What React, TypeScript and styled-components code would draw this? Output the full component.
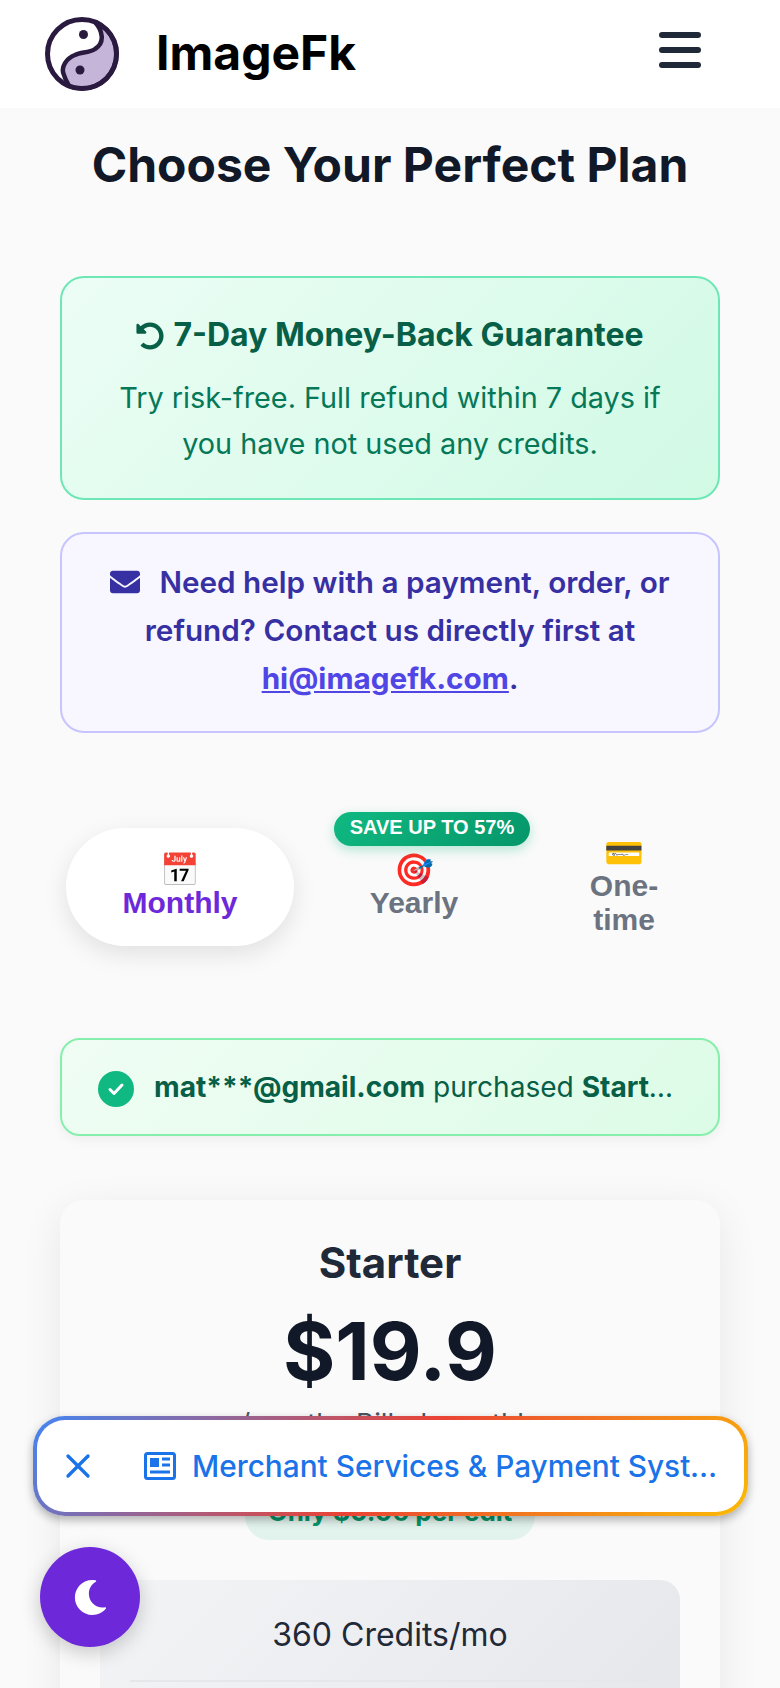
import * as React from "react";
import styled, { createGlobalStyle } from "styled-components";
import { X } from "lucide-react";
import { FaEnvelope, FaMoon, FaUndoAlt } from "react-icons/fa";

const GlobalStyle = createGlobalStyle`
  html, body {
    margin: 0;
    padding: 0;
    background: #fafafa;
    font-family: Inter, "Noto Sans", sans-serif;
    color: #111827;
  }
  * {
    box-sizing: border-box;
  }
  #root {
    height: 1688px;
    overflow: hidden;
  }
`;

const Header = styled.header`
  height: 108px;
  background: #ffffff;
  display: flex;
  align-items: center;
  justify-content: space-between;
  padding: 0 79px 0 45px;
`;

const Brand = styled.div`
  display: flex;
  align-items: center;
  gap: 37px;
`;

const BrandName = styled.span`
  font-size: 48px;
  font-weight: 700;
  color: #000000;
  line-height: 1;
  margin-bottom: 3px;
`;

const Burger = styled.div`
  display: flex;
  flex-direction: column;
  gap: 9px;
  width: 42px;
  margin-bottom: 8px;
`;

const BurgerLine = styled.span`
  display: block;
  height: 6px;
  border-radius: 3px;
  background: #1f2937;
`;

const Main = styled.main`
  padding: 0 60px;
`;

const Title = styled.h1`
  margin: 0 -40px;
  padding-top: 28px;
  height: 168px;
  text-align: center;
  font-size: 48px;
  line-height: 58px;
  font-weight: 700;
  color: #111827;
`;

const GuaranteeCard = styled.section`
  height: 224px;
  border: 2px solid #6ee7b7;
  border-radius: 24px;
  background: linear-gradient(135deg, #ecfdf5, #d1fae5);
  text-align: center;
  padding: 35px 48px 0;
`;

const GuaranteeTitle = styled.h2`
  margin: 0 -30px 18px;
  font-size: 32px;
  line-height: 44px;
  font-weight: 700;
  color: #065f46;
  white-space: nowrap;
  svg {
    vertical-align: -4px;
    margin-right: 9px;
  }
`;

const GuaranteeText = styled.p`
  margin: 0;
  font-size: 28.8px;
  line-height: 46px;
  color: #047857;
`;

const HelpCard = styled.section`
  margin-top: 32px;
  height: 201px;
  border: 2px solid #c7c4fe;
  border-radius: 24px;
  background: #f8f7ff;
  text-align: center;
  padding: 24px 24px 0;
  font-size: 29.7px;
  line-height: 48px;
  font-weight: 600;
  color: #3730a3;
  a {
    color: #4f46e5;
    font-weight: 700;
    text-decoration: underline;
  }
  svg {
    vertical-align: -4px;
    margin-right: 19px;
  }
`;

const Tabs = styled.div`
  position: relative;
  margin-top: 86px;
  height: 136px;
  display: flex;
  align-items: center;
  padding-left: 6px;
`;

const Tab = styled.div<{ $active?: boolean; $width: number }>`
  width: ${p => p.$width}px;
  height: 118px;
  flex: none;
  display: flex;
  flex-direction: column;
  align-items: center;
  justify-content: center;
  text-align: center;
  border-radius: 59px;
  background: ${p => (p.$active ? "#ffffff" : "transparent")};
  box-shadow: ${p => (p.$active ? "0 8px 24px rgba(0,0,0,0.1)" : "none")};
  color: ${p => (p.$active ? "#6d28d9" : "#6b7280")};
  font-family: "Liberation Sans", Arial, sans-serif;
  font-size: 30px;
  line-height: 34px;
  font-weight: 700;
`;

const TabEmoji = styled.span`
  font-size: 32px;
  line-height: 32px;
`;

const SaveBadge = styled.span`
  position: absolute;
  left: 274px;
  top: -7px;
  width: 196px;
  height: 34px;
  padding-bottom: 3px;
  border-radius: 17px;
  display: flex;
  align-items: center;
  justify-content: center;
  background: linear-gradient(135deg, #10b981, #059669);
  box-shadow: 0 4px 12px rgba(16, 185, 129, 0.3);
  color: #ffffff;
  font-family: "Liberation Sans", Arial, sans-serif;
  font-size: 20px;
  font-weight: 700;
`;

const SaleStrip = styled.div`
  margin-top: 83px;
  height: 98px;
  border: 2px solid #86efac;
  border-radius: 20px;
  background: linear-gradient(135deg, #f0fdf4, #dcfce7);
  box-shadow: 0 4px 12px rgba(0, 0, 0, 0.05);
  display: flex;
  align-items: center;
  gap: 20px;
  padding: 0 36px;
`;

const SaleCheck = styled.span`
  width: 36px;
  height: 36px;
  flex: none;
  margin-top: 4px;
  border-radius: 50%;
  background: #10b981;
  display: flex;
  align-items: center;
  justify-content: center;
`;

const SaleText = styled.span`
  font-size: 28.1px;
  color: #065f46;
  white-space: nowrap;
  overflow: hidden;
  text-overflow: ellipsis;
  b {
    font-weight: 700;
  }
`;

const PlanCard = styled.section`
  margin-top: 64px;
  height: 700px;
  border-radius: 24px;
  background: #fafafa;
  box-shadow: 0 10px 40px rgba(0, 0, 0, 0.08);
  padding: 35px 40px;
  text-align: center;
`;

const PlanName = styled.h3`
  margin: 0;
  font-size: 42px;
  line-height: 56px;
  font-weight: 700;
  color: #1f2937;
`;

const PlanPrice = styled.div`
  margin-top: 12px;
  font-size: 80px;
  line-height: 96px;
  font-weight: 700;
  color: #111827;
`;

const PlanPeriod = styled.div`
  margin-top: 4px;
  font-size: 27.6px;
  line-height: 40px;
  color: #4b5563;
`;

const PerEdit = styled.div`
  margin: 45px auto 0;
  width: 290px;
  height: 52px;
  padding-top: 8px;
  border-radius: 24px;
  background: rgba(16, 185, 129, 0.1);
  color: #059669;
  font-size: 26px;
  font-weight: 700;
`;

const Features = styled.div`
  margin-top: 40px;
  border-radius: 20px;
  background: linear-gradient(135deg, #f3f4f6, #e5e7eb);
  padding: 35px 30px;
`;

const Feature = styled.div`
  font-size: 32px;
  line-height: 40px;
  color: #1f2937;
  padding-bottom: 25px;
  border-bottom: 2px solid #e5e7eb;
`;

const NoticeBar = styled.div`
  position: fixed;
  left: 33px;
  top: 1416px;
  width: 715px;
  height: 100px;
  padding: 4px;
  border-radius: 32px;
  background: linear-gradient(135deg, #4285f4, #ea4335, #fbbc05);
  box-shadow: 0 4px 10px rgba(0, 0, 0, 0.3);
`;

const NoticeInner = styled.div`
  height: 100%;
  border-radius: 28px;
  background: #ffffff;
  display: flex;
  align-items: center;
  color: #1a73e8;
  padding: 0 25px 0 21px;
  svg {
    flex: none;
  }
`;

const NoticeIcon = styled.svg`
  margin-left: 46px;
  margin-right: 16px;
`;

const NoticeText = styled.span`
  font-size: 29.8px;
  font-weight: 500;
  white-space: nowrap;
  overflow: hidden;
  text-overflow: ellipsis;
`;

const ThemeButton = styled.button`
  position: fixed;
  left: 40px;
  top: 1547px;
  width: 100px;
  height: 100px;
  border: 0;
  padding: 0;
  border-radius: 50%;
  background: #6d28d9;
  box-shadow: 0 6px 20px rgba(0, 0, 0, 0.2);
  display: flex;
  align-items: center;
  justify-content: center;
  color: #ffffff;
`;

const YinYang = () => (
  <svg width="74" height="74" viewBox="0 0 74 74" fill="none">
    <circle cx="37" cy="37" r="34.5" fill="#ffffff" />
    <path
      d="M49.900 5C58 14 60 26 50 32C44 36 36 35 30 38C22 41 15 50 19 58C20 62 22 65 24.100 69A34.500 34.500 0 0 0 49.900 5Z"
      fill="#c5b5d9"
      stroke="#2a1a40"
      strokeWidth="4.500"
    />
    <circle cx="37" cy="37" r="34.5" stroke="#2a1a40" strokeWidth="5" />
    <circle cx="38.500" cy="17.500" r="4.500" fill="#2a1a40" />
    <circle cx="35" cy="53" r="4.500" fill="#2a1a40" />
  </svg>
);

const App = () => (
  <>
    <GlobalStyle />
    <Header>
      <Brand>
        <YinYang />
        <BrandName>ImageFk</BrandName>
      </Brand>
      <Burger>
        <BurgerLine />
        <BurgerLine />
        <BurgerLine />
      </Burger>
    </Header>
    <Main>
      <Title>Choose Your Perfect Plan</Title>
      <GuaranteeCard>
        <GuaranteeTitle>
          <FaUndoAlt size={28} />
          7-Day Money-Back Guarantee
        </GuaranteeTitle>
        <GuaranteeText>
          Try risk-free. Full refund within 7 days if you have not used any credits.
        </GuaranteeText>
      </GuaranteeCard>
      <HelpCard>
        <FaEnvelope size={30} />
        Need help with a payment, order, or refund? Contact us directly first at{" "}
        <a href="#help">hi@imagefk.com</a>.
      </HelpCard>
      <Tabs>
        <Tab $active $width={228}>
          <TabEmoji>📅</TabEmoji>
          Monthly
        </Tab>
        <Tab $width={240}>
          <TabEmoji>🎯</TabEmoji>
          Yearly
        </Tab>
        <Tab $width={180}>
          <TabEmoji>💳</TabEmoji>
          One-
          <br />
          time
        </Tab>
        <SaveBadge>SAVE UP TO 57%</SaveBadge>
      </Tabs>
      <SaleStrip>
        <SaleCheck>
          <svg width="20" height="20" viewBox="0 0 20 20" fill="none">
            <path d="M4 10.500l4 4 8-8.500" stroke="#ffffff" strokeWidth="3" strokeLinecap="round" strokeLinejoin="round" />
          </svg>
        </SaleCheck>
        <SaleText>
          <b>mat***@gmail.com</b> purchased <b>Starter plan</b>
        </SaleText>
      </SaleStrip>
      <PlanCard>
        <PlanName>Starter</PlanName>
        <PlanPrice>$19.9</PlanPrice>
        <PlanPeriod>/month · Billed monthly</PlanPeriod>
        <PerEdit>Only $0.06 per edit</PerEdit>
        <Features>
          <Feature>360 Credits/mo</Feature>
        </Features>
      </PlanCard>
    </Main>
    <NoticeBar>
      <NoticeInner>
        <X size={40} strokeWidth={2} />
        <NoticeIcon width="32" height="28" viewBox="0 0 32 28" fill="none">
          <rect x="1.500" y="1.500" width="29" height="25" rx="2" stroke="currentColor" strokeWidth="3" />
          <rect x="6" y="6" width="9" height="9" fill="currentColor" />
          <path d="M18 7h8M18 13h8M6 20h20" stroke="currentColor" strokeWidth="3" />
        </NoticeIcon>
        <NoticeText>Merchant Services &amp; Payment Systems Explained</NoticeText>
      </NoticeInner>
    </NoticeBar>
    <ThemeButton aria-label="Toggle theme">
      <FaMoon size={35} />
    </ThemeButton>
  </>
);

export default App;
